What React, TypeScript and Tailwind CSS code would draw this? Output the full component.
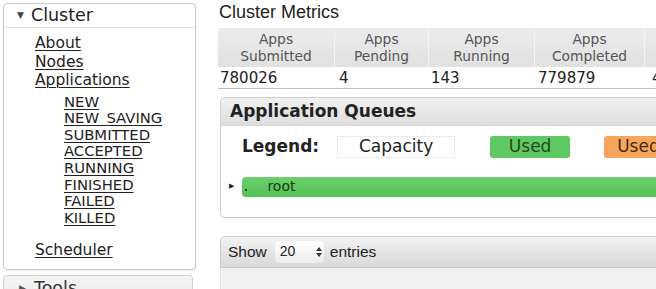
import React from 'react';

const sans = "font-['DejaVu_Sans',Verdana,sans-serif]";
const helv = "font-['Liberation_Sans',Arial,sans-serif]";

const mainLinks = ['About', 'Nodes', 'Applications'];
const appStates = ['NEW', 'NEW_SAVING', 'SUBMITTED', 'ACCEPTED', 'RUNNING', 'FINISHED', 'FAILED', 'KILLED'];

const metrics = [
  { top: 'Apps', bottom: 'Submitted', value: '780026', w: 'w-[117px]', pad: 'pl-[2px]' },
  { top: 'Apps', bottom: 'Pending', value: '4', w: 'w-[94px]', pad: 'pl-[4px]' },
  { top: 'Apps', bottom: 'Running', value: '143', w: 'w-[106px]', pad: 'pl-[2px]' },
  { top: 'Apps', bottom: 'Completed', value: '779879', w: 'w-[110px]', pad: 'pl-[3px]' },
  { top: 'Containers', bottom: 'Running', value: '4512', w: 'w-[110px]', pad: 'pl-[7px]' },
];

function Sidebar() {
  return (
    <div className={`ml-[3px] mt-[3px] flex w-[193px] shrink-0 flex-col ${sans}`}>
      <div className="rounded-[4px] border border-[#c9c9c9] bg-white shadow-[0_1px_2px_rgba(0,0,0,0.08)]">
        <div className="flex h-[24px] items-center border-b border-[#e2e2e2] pl-[13px] text-[17.5px] leading-[23px] text-[#222]">
          <span className="mr-[7px] text-[9px] leading-none text-[#444]">▼</span>
          Cluster
        </div>
        <ul className="pl-[31px] pt-[6px] text-[15.5px] leading-[18.5px] text-[#222]">
          {mainLinks.map((l) => (
            <li key={l}>
              <a className="underline decoration-1 underline-offset-2">{l}</a>
            </li>
          ))}
        </ul>
        <ul className="mt-[4px] pl-[60px] text-[14.8px] leading-[16.65px] text-[#222]">
          {appStates.map((s) => (
            <li key={s}>
              <a className="underline decoration-1 underline-offset-2">{s}</a>
            </li>
          ))}
        </ul>
        <div className="mt-[14px] pb-[10px] pl-[31px] text-[15.5px] leading-[18.5px] text-[#222]">
          <a className="underline decoration-1 underline-offset-2">Scheduler</a>
        </div>
      </div>
      <div className="mt-[5px] w-[190px] rounded-[4px] border border-[#d2d2d2] bg-gradient-to-b from-[#f6f6f6] to-[#e9e9e9]">
        <div className="flex h-[24px] items-center pl-[15px] text-[17.5px] leading-[23px] text-[#333]">
          <span className="mr-[8px] text-[9px] leading-none text-[#555]">▶</span>
          Tools
        </div>
      </div>
    </div>
  );
}

function MetricsTable() {
  return (
    <div className={`flex ${helv}`}>
      {metrics.map((m) => (
        <div key={m.bottom + m.top} className={`flex shrink-0 flex-col ${m.w}`}>
          <div
            className={`flex h-[39px] flex-col items-center justify-center border-r border-[#f4f4f4] bg-gradient-to-b from-[#ececec] to-[#e1e1e1] text-[13.8px] leading-[17px] text-[#555] ${sans}`}
          >
            <span>{m.top}</span>
            <span>{m.bottom}</span>
          </div>
          <div
            className={`flex h-[22px] items-center border-b border-[#bdbdbd] bg-white pt-[2px] text-[15px] text-[#222] ${m.pad} ${sans}`}
          >
            {m.value}
          </div>
        </div>
      ))}
    </div>
  );
}

function QueuesBox() {
  return (
    <div className={`ml-[2px] mt-[8px] w-[460px] shrink-0 rounded-[5px] border border-[#cfcfcf] bg-white ${sans}`}>
      <div className="flex h-[28px] items-center rounded-t-[5px] border-b border-[#d6d6d6] bg-gradient-to-b from-[#f1f1f1] to-[#dedede] pl-[9px] text-[17px] font-bold text-[#222]">
        Application Queues
      </div>
      <div className="flex items-center whitespace-nowrap pl-[21px] pt-[8px]">
        <span className="text-[17px] font-bold text-[#222]">Legend:</span>
        <span className="ml-[18px] flex h-[22px] w-[118px] shrink-0 items-center justify-center border border-[#ececec] text-[17px] text-[#222]">
          Capacity
        </span>
        <span className="ml-[35px] flex h-[22px] w-[80px] shrink-0 items-center justify-center rounded-[3px] bg-[#60c862] text-[17px] text-[#1e4a1e]">
          Used
        </span>
        <span className="ml-[34px] flex h-[22px] w-[190px] shrink-0 items-center justify-start rounded-[3px] bg-[#f5a65b] pl-[13px] text-[17px] text-[#4a2a0c]">
          Used (over capacity)
        </span>
      </div>
      <div className="mb-[20px] mt-[17px] flex items-center pl-[8px]">
        <span className="text-[7px] leading-none text-[#222]">▶</span>
        <div className="ml-[8px] flex h-[20px] flex-1 items-center rounded-l-[4px] bg-gradient-to-b from-[#6cd06c] to-[#55c055] pl-[3px] text-[14px] text-[#183818]">
          <span className="mt-[6px] h-[2px] w-[2px] bg-[#333]" />
          <span className="ml-[20px]">root</span>
        </div>
      </div>
    </div>
  );
}

function ShowEntries() {
  return (
    <div className={`ml-[2px] mt-[18px] w-[460px] shrink-0 ${helv}`}>
      <div className="flex h-[32px] items-center rounded-tl-[5px] border border-[#c9c9c9] bg-gradient-to-b from-[#f2f2f2] to-[#d9d9d9] pl-[7px] text-[15.5px] text-[#222]">
        <span>Show</span>
        <span className="ml-[8px] flex h-[22px] w-[49px] items-center rounded-[4px] bg-gradient-to-b from-white to-[#ececec] pl-[5px] text-[14px]">
          20
          <svg className="ml-[21px]" width="6" height="10" viewBox="0 0 6 10">
            <path d="M0 4 L3 0 L6 4 Z" fill="#333" />
            <path d="M0 6 L3 10 L6 6 Z" fill="#333" />
          </svg>
        </span>
        <span className="ml-[6px]">entries</span>
      </div>
      <div className="h-[24px] border-x border-[#e2e2e2] bg-[#f1f1f1]" />
    </div>
  );
}

export default function App() {
  return (
    <div className="flex h-[289px] w-[656px] overflow-hidden bg-white">
      <Sidebar />
      <div className="ml-[22px] flex shrink-0 flex-col">
        <h2 className={`mt-[1px] h-[22px] pl-[1px] text-[18px] leading-[22px] text-[#222] ${helv}`}>Cluster Metrics</h2>
        <div className="mt-[5px]">
          <MetricsTable />
        </div>
        <QueuesBox />
        <ShowEntries />
      </div>
    </div>
  );
}
